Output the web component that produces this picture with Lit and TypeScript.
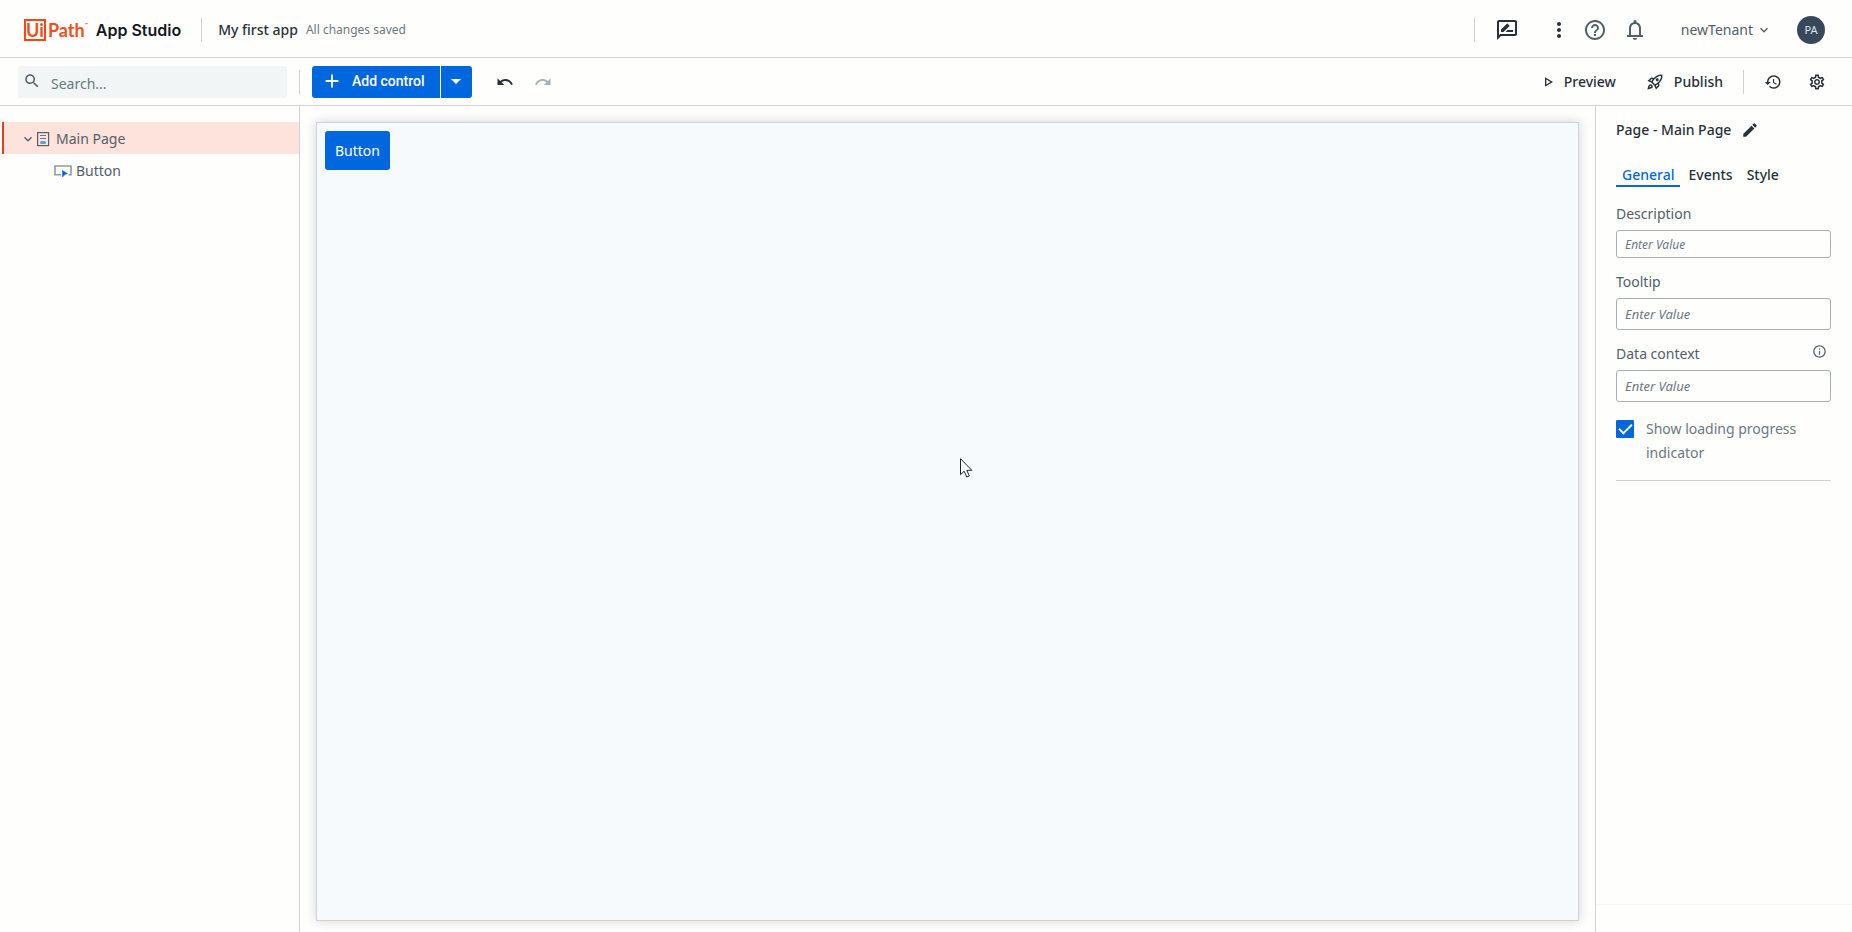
import { LitElement, html, css, svg } from "lit";
import { customElement, property, state } from "lit/decorators.js";
import { classMap } from "lit/directives/class-map.js";

const ICONS: Record<string, string> = {
  review:
    "M20 2H4c-1.1 0-1.99.9-1.99 2L2 22l4-4h14c1.1 0 2-.9 2-2V4c0-1.1-.9-2-2-2zm0 14H5.17l-.59.59-.58.58V4h16v12zm-9.5-2H18v-2h-5.5zm3.86-5.87c.2-.2.2-.51 0-.71l-1.77-1.77c-.2-.2-.51-.2-.71 0L6 11.53V14h2.47l5.89-5.87z",
  more:
    "M12 8c1.1 0 2-.9 2-2s-.9-2-2-2-2 .9-2 2 .9 2 2 2zm0 2c-1.1 0-2 .9-2 2s.9 2 2 2 2-.9 2-2-.9-2-2-2zm0 6c-1.1 0-2 .9-2 2s.9 2 2 2 2-.9 2-2-.9-2-2-2z",
  help:
    "M11 18h2v-2h-2v2zm1-16C6.48 2 2 6.48 2 12s4.48 10 10 10 10-4.48 10-10S17.52 2 12 2zm0 18c-4.41 0-8-3.59-8-8s3.59-8 8-8 8 3.59 8 8-3.59 8-8 8zm0-14c-2.21 0-4 1.79-4 4h2c0-1.1.9-2 2-2s2 .9 2 2c0 2-3 1.75-3 5h2c0-2.25 3-2.5 3-5 0-2.21-1.79-4-4-4z",
  bell:
    "M4 19v-2h2v-7c0-2.8 1.7-5.1 4.5-5.8V3.5a1.5 1.5 0 0 1 3 0v.7C16.3 4.9 18 7.2 18 10v7h2v2H4zm8 3c-1.1 0-2-.9-2-2h4c0 1.1-.9 2-2 2zM8 17h8v-7c0-2.2-1.8-4-4-4s-4 1.8-4 4v7z",
  undo:
    "M12.5 8c-2.65 0-5.05.99-6.9 2.6L2 7v9h9l-3.62-3.62c1.39-1.16 3.16-1.88 5.12-1.88 3.54 0 6.55 2.31 7.6 5.5l2.37-.78C21.08 11.03 17.15 8 12.5 8z",
  redo:
    "M18.4 10.6C16.55 8.99 14.15 8 11.5 8c-4.65 0-8.58 3.03-9.96 7.22L3.9 16c1.05-3.19 4.05-5.5 7.6-5.5 1.95 0 3.73.72 5.12 1.88L13 16h9V7l-3.6 3.6z",
  search:
    "M15.5 14h-.79l-.28-.27C15.41 12.59 16 11.11 16 9.5 16 5.91 13.09 3 9.5 3S3 5.91 3 9.5 5.91 16 9.5 16c1.61 0 3.09-.59 4.23-1.57l.27.28v.79l5 4.99L20.49 19l-4.99-5zm-6 0C7.01 14 5 11.99 5 9.5S7.01 5 9.5 5 14 7.01 14 9.5 11.99 14 9.5 14z",
  plus: "M19 13h-6v6h-2v-6H5v-2h6V5h2v6h6v2z",
  drop: "M7 10l5 5 5-5z",
  chevron: "M7.41 8.59L12 13.17l4.59-4.58L18 10l-6 6-6-6z",
  edit:
    "M3 17.25V21h3.75L17.81 9.94l-3.75-3.75L3 17.25zM20.71 7.04c.39-.39.39-1.02 0-1.41l-2.34-2.34c-.39-.39-1.02-.39-1.41 0l-1.83 1.83 3.75 3.75 1.83-1.83z",
  info:
    "M11 7h2v2h-2zm0 4h2v6h-2zm1-9C6.48 2 2 6.48 2 12s4.48 10 10 10 10-4.48 10-10S17.52 2 12 2zm0 18c-4.41 0-8-3.59-8-8s3.59-8 8-8 8 3.59 8 8-3.59 8-8 8z",
  play: "M6 5v14l12-7zm2 3.4L14.2 12 8 15.6z",
  rocket:
    "M6 15c-.83 0-1.58.34-2.12.88C2.7 17.06 2 22 2 22s4.94-.7 6.12-1.88C8.66 19.58 9 18.83 9 18c0-1.66-1.34-3-3-3zm.71 3.71c-.28.28-2.17.76-2.17.76s.47-1.88.76-2.17c.17-.19.42-.3.7-.3.55 0 1 .45 1 1 0 .28-.11.53-.29.71zm10.71-5.06c6.36-6.36 4.24-11.31 4.24-11.31S16.71.22 10.35 6.58l-2.49-.5c-.65-.13-1.33.08-1.81.55L2 10.69l5 2.14L11.17 17l2.14 5 4.05-4.05c.47-.47.68-1.15.55-1.81l-.49-2.49zM7.41 10.83l-1.91-.82 1.97-1.97 1.44.29c-.57.83-1.08 1.7-1.5 2.5zm6.58 7.67l-.82-1.91c.8-.42 1.67-.93 2.49-1.5l.29 1.44-1.96 1.97zM16 12.24c-1.32 1.32-3.38 2.4-4.04 2.73l-2.93-2.93c.32-.65 1.4-2.71 2.73-4.04 4.68-4.68 8.23-3.99 8.23-3.99s.69 3.55-3.99 8.23zM15 11c1.1 0 2-.9 2-2s-.9-2-2-2-2 .9-2 2 .9 2 2 2z",
  history:
    "M13 3c-4.97 0-9 4.03-9 9H1l3.89 3.89.07.14L9 12H6c0-3.87 3.13-7 7-7s7 3.13 7 7-3.13 7-7 7c-1.93 0-3.68-.79-4.94-2.06l-1.42 1.42C8.27 19.99 10.51 21 13 21c4.97 0 9-4.03 9-9s-4.03-9-9-9zm-1 5v5l4.28 2.54.72-1.21-3.5-2.08V8H12z",
  gear:
    "M19.43 12.98c.04-.32.07-.64.07-.98 0-.34-.03-.66-.07-.98l2.11-1.65c.19-.15.24-.42.12-.64l-2-3.46c-.09-.16-.26-.25-.44-.25-.06 0-.12.01-.17.03l-2.49 1c-.52-.4-1.08-.73-1.69-.98l-.38-2.65C14.46 2.18 14.25 2 14 2h-4c-.25 0-.46.18-.49.42l-.38 2.65c-.61.25-1.17.59-1.69.98l-2.49-1c-.06-.02-.12-.03-.18-.03-.17 0-.34.09-.43.25l-2 3.46c-.13.22-.07.49.12.64l2.11 1.65c-.04.32-.07.65-.07.98 0 .33.03.66.07.98l-2.11 1.65c-.19.15-.24.42-.12.64l2 3.46c.09.16.26.25.44.25.06 0 .12-.01.17-.03l2.49-1c.52.4 1.08.73 1.69.98l.38 2.65c.03.24.24.42.49.42h4c.25 0 .46-.18.49-.42l.38-2.65c.61-.25 1.17-.59 1.69-.98l2.49 1c.06.02.12.03.18.03.17 0 .34-.09.43-.25l2-3.46c.12-.22.07-.49-.12-.64l-2.11-1.65zm-1.98-1.71c.04.31.05.52.05.73 0 .21-.02.43-.05.73l-.14 1.13.89.7 1.08.84-.7 1.21-1.27-.51-1.04-.42-.9.68c-.43.32-.84.56-1.25.73l-1.06.43-.16 1.13-.2 1.35h-1.4l-.19-1.35-.16-1.13-1.06-.43c-.43-.18-.83-.41-1.23-.71l-.91-.7-1.06.43-1.27.51-.7-1.21 1.08-.84.89-.7-.14-1.13c-.03-.31-.05-.54-.05-.74s.02-.43.05-.73l.14-1.13-.89-.7-1.08-.84.7-1.21 1.27.51 1.04.42.9-.68c.43-.32.84-.56 1.25-.73l1.06-.43.16-1.13.2-1.35h1.39l.19 1.35.16 1.13 1.06.43c.43.18.83.41 1.23.71l.91.7 1.06-.43 1.27-.51.7 1.21-1.07.85-.89.7.14 1.13zM12 8c-2.21 0-4 1.79-4 4s1.79 4 4 4 4-1.79 4-4-1.79-4-4-4zm0 6c-1.1 0-2-.9-2-2s.9-2 2-2 2 .9 2 2-.9 2-2 2z",
};

@customElement("app-icon")
export class AppIcon extends LitElement {
  @property() name = "";
  @property({ type: Number }) size = 24;

  static styles = css`
    :host { display: block; flex: none; line-height: 0; }
    svg { display: block; fill: currentColor; }
  `;

  render() {
    return html`<svg width=${this.size} height=${this.size} viewBox="0 0 24 24" aria-hidden="true">
      ${svg`<path fill-rule="evenodd" d=${ICONS[this.name] ?? ""}></path>`}
    </svg>`;
  }
}

const base = css`
  :host, *, *::before, *::after { box-sizing: border-box; }
  button {
    display: flex; align-items: center; margin: 0; padding: 0; border: 0;
    background: none; color: inherit; font: inherit; cursor: pointer;
  }
  .rule { flex: none; width: 1px; height: 24px; background: #cfd3d6; }
`;

@customElement("app-header")
export class AppHeader extends LitElement {
  static styles = [base, css`
    :host {
      display: flex; align-items: center; height: 58px; padding: 2px 27px 0 24px;
      border-bottom: 1px solid #d3d5d8; color: #273139; font-size: 14px; line-height: 20px;
    }
    .logo { display: flex; align-items: center; gap: 2px; color: #f04e23; font: 700 18px/22px Lato, sans-serif; text-decoration: none; }
    .mark { display: flex; justify-content: center; width: 22px; height: 22px; border: 2px solid #fa4616; line-height: 18px; }
    .tm { align-self: flex-start; font-size: 4px; line-height: 12px; margin-left: -2px; }
    .product { margin: 0 0 0 8px; color: #14191d; font: 600 16px/22px Inter, sans-serif; }
    .product-rule { margin: 0 16px 0 20px; }
    .name { font-size: 14px; font-weight: 500; }
    .saved { margin-left: 8px; color: #6b7882; font-size: 12px; }
    .end { display: flex; align-items: center; margin-left: auto; }
    .review { margin-left: 20px; }
    .more { margin-left: 28px; }
    .help { margin-left: 12px; color: #526069; }
    .bell { margin-left: 16px; color: #526069; }
    .tenant { margin-left: 34px; gap: 3px; color: #526069; }
    .avatar {
      justify-content: center; width: 28px; height: 28px; margin-left: 25px; border-radius: 50%;
      background: #38485c; color: #dfe4e8; font-size: 11px;
    }
  `];

  render() {
    return html`
      <a class="logo" href="#" aria-label="UiPath"><span class="mark">Ui</span><span>Path</span><span class="tm">™</span></a>
      <h1 class="product">App Studio</h1>
      <span class="rule product-rule"></span>
      <span class="name">My first app</span>
      <span class="saved">All changes saved</span>
      <div class="end">
        <span class="rule"></span>
        <button class="review" aria-label="Feedback"><app-icon name="review"></app-icon></button>
        <button class="more" aria-label="More"><app-icon name="more"></app-icon></button>
        <button class="help" aria-label="Help"><app-icon name="help"></app-icon></button>
        <button class="bell" aria-label="Notifications"><app-icon name="bell"></app-icon></button>
        <button class="tenant">newTenant<app-icon name="chevron" size="16"></app-icon></button>
        <button class="avatar" aria-label="Account">PA</button>
      </div>
    `;
  }
}

@customElement("app-toolbar")
export class AppToolbar extends LitElement {
  static styles = [base, css`
    :host {
      display: flex; align-items: center; height: 48px; padding: 0 26px 0 18px;
      border-bottom: 1px solid #d3d5d8; color: #273139; font-size: 14px; font-weight: 500; line-height: 20px;
    }
    .search {
      display: flex; align-items: center; width: 269px; height: 32px; padding-left: 5px; gap: 10px;
      border-radius: 3px; background: #f2f5f6; color: #526069;
    }
    .search input {
      flex: 1; min-width: 0; height: 32px; padding: 4px 0 0; border: 0; background: none;
      color: #526069; font: 400 14px/20px "Noto Sans", sans-serif;
    }
    .search input::placeholder { color: #6b7882; opacity: 1; }
    .search app-icon { padding-bottom: 2px; }
    .search-rule { margin: 0 12px; }
    .split { display: flex; gap: 1px; font-family: Roboto, sans-serif; color: #fff; }
    .split button { height: 32px; background: #0067df; }
    .add { width: 128px; padding: 0 0 2px 9px; gap: 9px; border-radius: 3px 0 0 3px; }
    .menu { width: 31px; justify-content: center; padding: 0 2px 2px 0; border-radius: 0 3px 3px 0; }
    .undo { margin-left: 24px; }
    .redo { margin-left: 20px; color: #a4b1b8; }
    .end { display: flex; align-items: center; margin-left: auto; }
    .preview { gap: 7px; }
    .publish { margin-left: 30px; gap: 10px; }
    .end-rule { margin: 0 20px; }
    .settings { margin-left: 26px; }
  `];

  render() {
    return html`
      <label class="search">
        <app-icon name="search" size="18"></app-icon>
        <input type="text" placeholder="Search..." aria-label="Search" />
      </label>
      <span class="rule search-rule"></span>
      <div class="split">
        <button class="add"><app-icon name="plus" size="22"></app-icon>Add control</button>
        <button class="menu" aria-label="More controls"><app-icon name="drop"></app-icon></button>
      </div>
      <button class="undo" aria-label="Undo"><app-icon name="undo" size="18"></app-icon></button>
      <button class="redo" aria-label="Redo" disabled><app-icon name="redo" size="18"></app-icon></button>
      <div class="end">
        <button class="preview"><app-icon name="play" size="16"></app-icon>Preview</button>
        <button class="publish"><app-icon name="rocket" size="18"></app-icon>Publish</button>
        <span class="rule end-rule"></span>
        <button aria-label="History"><app-icon name="history" size="18"></app-icon></button>
        <button class="settings" aria-label="Settings"><app-icon name="gear" size="18"></app-icon></button>
      </div>
    `;
  }
}

@customElement("control-tree")
export class ControlTree extends LitElement {
  static styles = [base, css`
    :host {
      display: block; padding-top: 16px; border-right: 1px solid #cfd3d6;
      color: #526069; font-size: 14px; line-height: 20px;
    }
    .row { display: flex; align-items: center; width: 100%; height: 32px; text-align: left; }
    .page { margin-left: 2px; width: calc(100% - 2px); padding: 2px 0 0 16px; border-left: 2px solid #e0401c; background: #fee2dc; }
    .page span { margin-left: 6px; }
    .child { padding: 2px 0 0 54px; gap: 4px; }
    svg { display: block; flex: none; }
  `];

  render() {
    return html`
      <button class="row page">
        <app-icon name="chevron" size="16"></app-icon>
        <svg width="14" height="16" viewBox="0 0 14 16" aria-hidden="true">
          <rect x="1.6" y="1.6" width="11" height="13" fill="none" stroke="#526069" stroke-width="1.2"></rect>
          <path d="M4 4.5h6M4 7.5h6" stroke="#6b7882" stroke-width="1.2"></path>
          <rect x="4" y="10" width="6" height="3" rx="1.5" fill="#5c9be0"></rect>
        </svg>
        <span>Main Page</span>
      </button>
      <button class="row child">
        <svg width="18" height="14" viewBox="0 0 18 14" aria-hidden="true">
          <path d="M7 10.7H1V2h16v8.7h-2.500" fill="none" stroke="#8d9aa2" stroke-width="1.6"></path>
          <path d="M8.5 6.5l5 3.2-2.4.6L8.5 13z" fill="#0067df" stroke="#0067df" stroke-width=".6"></path>
        </svg>
        <span>Button</span>
      </button>
    `;
  }
}

@customElement("design-surface")
export class DesignSurface extends LitElement {
  static styles = [base, css`
    :host { display: grid; padding: 16px 16px 11px; }
    .page {
      position: relative; padding: 8px; border: 1px solid #cdd3d7; background: #f6fafd;
      box-shadow: 0 0 10px rgba(50, 60, 80, 0.22);
    }
    .control {
      height: 39px; padding: 0 10px; border-radius: 3px; background: #0067df; color: #fff;
      font-size: 14px; font-weight: 400; line-height: 20px;
    }
    .pointer { position: absolute; left: 51%; top: 42%; }
  `];

  render() {
    return html`
      <main class="page">
        <button class="control">Button</button>
        <svg class="pointer" width="13" height="20" viewBox="0 0 13 20" aria-hidden="true">
          <path d="M.5.7v16l3.7-3.5 2.6 5.8 2.5-1.1-2.5-5.6h5z" fill="#fff" stroke="#1b2430"></path>
        </svg>
      </main>
    `;
  }
}

@customElement("property-panel")
export class PropertyPanel extends LitElement {
  @state() private tab = "General";

  static styles = [base, css`
    :host {
      display: flex; flex-direction: column; padding: 14px 21px 0 20px; border-left: 1px solid #cfd3d6;
      color: #526069; font-size: 14px; line-height: 20px;
    }
    .title { display: flex; align-items: center; gap: 10px; color: #273139; }
    .title h2 { margin: 0; font: inherit; font-weight: 500; }
    .tabs { display: flex; gap: 2px; margin-top: 21px; color: #273139; font-weight: 500; }
    .tabs button { height: 26px; padding: 4px 6px 0; border-bottom: 2px solid transparent; }
    .tabs .active { color: #0067df; border-bottom-color: #0067df; }
    .field { margin-top: 14px; }
    .caption { display: flex; justify-content: space-between; margin-bottom: 6px; padding-right: 4px; }
    .field input {
      display: block; width: 100%; height: 32px; padding: 0 8px; border: 1px solid #a4b1b8; border-radius: 3px;
      background: #fefefd; color: #526069; font: italic 400 13px/16px "Noto Sans", sans-serif;
    }
    .field input::placeholder { color: #6b7882; opacity: 1; }
    .field.compact { margin-top: 17px; }
    .field.compact input { height: 28px; font-size: 12px; }
    .check { display: flex; margin-top: 15px; gap: 12px; padding-bottom: 15px; border-bottom: 1px solid #cfd3d6; line-height: 24px; color: #6b7882; }
    .check input {
      flex: none; appearance: none; width: 18px; height: 18px; margin: 3px 0 0; border-radius: 1px;
      background: #0067df; display: grid; place-items: center;
    }
    .check input::after {
      content: ""; width: 13px; height: 7px; margin-bottom: 4px; border: solid #fff; border-width: 0 0 2px 2px;
      transform: rotate(-45deg);
    }
    .check input:not(:checked)::after { visibility: hidden; }
    .foot { height: 28px; margin: auto -21px 0 -20px; border-top: 1px solid #f3f4fa; }
  `];

  render() {
    return html`
      <div class="title">
        <h2>Page - Main Page</h2>
        <button aria-label="Rename"><app-icon name="edit" size="18"></app-icon></button>
      </div>
      <div class="tabs" role="tablist">
        ${["General", "Events", "Style"].map((t) => html`
          <button role="tab" aria-selected=${t === this.tab} class=${classMap({ active: t === this.tab })}
            @click=${() => { this.tab = t; }}>${t}</button>`)}
      </div>
      <div class="field compact">
        <div class="caption"><label for="description">Description</label></div>
        <input id="description" type="text" placeholder="Enter Value" />
      </div>
      <div class="field">
        <div class="caption"><label for="tooltip">Tooltip</label></div>
        <input id="tooltip" type="text" placeholder="Enter Value" />
      </div>
      <div class="field">
        <div class="caption"><label for="context">Data context</label><app-icon name="info" size="15"></app-icon></div>
        <input id="context" type="text" placeholder="Enter Value" />
      </div>
      <label class="check"><input type="checkbox" checked /><span>Show loading progress indicator</span></label>
      <div class="foot"></div>
    `;
  }
}

@customElement("app-root")
export class AppRoot extends LitElement {
  static styles = css`
    :host {
      display: flex; flex-direction: column; min-height: 100vh; background: #fefefd;
      font-family: "Noto Sans", sans-serif;
    }
    .workspace { flex: 1; display: grid; grid-template-columns: 300px minmax(0, 1fr) 257px; }
  `;

  render() {
    return html`
      <app-header></app-header>
      <app-toolbar></app-toolbar>
      <div class="workspace">
        <control-tree></control-tree>
        <design-surface></design-surface>
        <property-panel></property-panel>
      </div>
    `;
  }
}
